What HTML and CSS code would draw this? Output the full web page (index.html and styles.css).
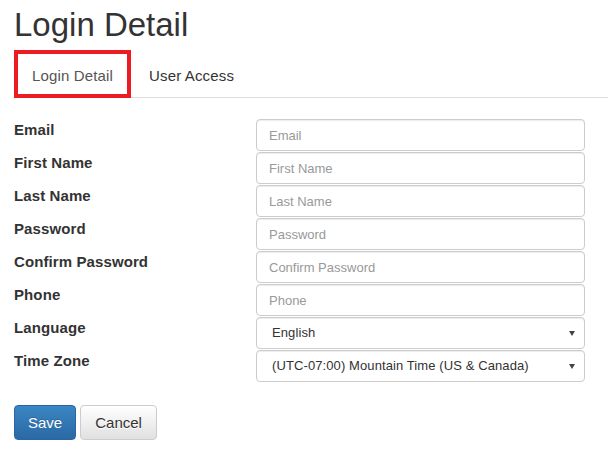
FILE: index.html
```html
<!DOCTYPE html>
<html>
<head>
<meta charset="utf-8">
<link rel="stylesheet" href="styles.css">
</head>
<body>
<div class="page">
  <h1 class="title">Login Detail</h1>
  <ul class="tabs">
    <li class="tab active">Login Detail</li>
    <li class="tab">User Access</li>
  </ul>
  <form class="form">
    <div class="row"><label class="lbl">Email</label><input class="ctl" placeholder="Email"></div>
    <div class="row"><label class="lbl">First Name</label><input class="ctl" placeholder="First Name"></div>
    <div class="row"><label class="lbl">Last Name</label><input class="ctl" placeholder="Last Name"></div>
    <div class="row"><label class="lbl">Password</label><input class="ctl" type="password" placeholder="Password"></div>
    <div class="row"><label class="lbl">Confirm Password</label><input class="ctl" type="password" placeholder="Confirm Password"></div>
    <div class="row"><label class="lbl">Phone</label><input class="ctl" placeholder="Phone"></div>
    <div class="row"><label class="lbl">Language</label><div class="sel"><span>English</span></div></div>
    <div class="row"><label class="lbl">Time Zone</label><div class="sel"><span>(UTC-07:00) Mountain Time (US &amp; Canada)</span></div></div>
    <div class="actions">
      <button type="button" class="btn primary">Save</button>
      <button type="button" class="btn default">Cancel</button>
    </div>
  </form>
</div>
</body>
</html>
```
FILE: styles.css
```css
* { box-sizing: border-box; }
html, body { margin: 0; padding: 0; background: #fff; }
body {
  font-family: "Liberation Sans", Arial, sans-serif;
  color: #333;
  font-size: 14px;
  line-height: 20px;
}
.page { padding-left: 14px; }
.title {
  margin: 7px 0 8px 0;
  font-size: 33px;
  line-height: 35px;
  font-weight: normal;
  color: #333;
}
.tabs {
  list-style: none;
  margin: 0;
  padding: 0;
  display: flex;
  border-bottom: 1px solid #ddd;
}
.tab {
  font-size: 15px;
  line-height: 20px;
  letter-spacing: 0.15px;
  padding: 12px 14px 8px 14px;
  border: 4px solid transparent;
  margin-bottom: -1px;
  color: #333;
}
.tab.active {
  border-color: #ed1c24;
  color: #555;
}
.form { padding-top: 21px; }
.row {
  display: flex;
  align-items: flex-start;
  margin-bottom: 1px;
}
.lbl {
  width: 242px;
  flex: none;
  font-weight: bold;
  font-size: 15px;
  line-height: 20px;
  padding-top: 1px;
  letter-spacing: 0.1px;
  color: #333;
}
.ctl, .sel {
  width: 329px;
  height: 32px;
  border: 1px solid #ccc;
  border-radius: 4px;
  box-shadow: inset 0 1px 1px rgba(0,0,0,.075);
  font-family: "Liberation Sans", Arial, sans-serif;
  font-size: 13px;
  color: #555;
  background: #fff;
}
.ctl {
  padding: 0 12px;
  outline: none;
}
.ctl::placeholder { color: #999; }
.sel {
  position: relative;
  display: flex;
  align-items: center;
  padding-left: 15px;
  color: #333;
}
.sel span { letter-spacing: 0.1px; }
.sel::after {
  content: "";
  position: absolute;
  right: 9px;
  top: 13px;
  border-left: 3.5px solid transparent;
  border-right: 3.5px solid transparent;
  border-top: 5px solid #444;
}
.actions {
  display: flex;
  gap: 4px;
  padding-top: 22px;
}
.btn {
  font-family: "Liberation Sans", Arial, sans-serif;
  font-size: 15px;
  line-height: 21px;
  padding: 6px 13px;
  border-radius: 4px;
  border: 1px solid;
  cursor: pointer;
}
.btn.default { padding: 6px 14px; }
.btn.primary {
  color: #fff;
  background: linear-gradient(to bottom, #3a86c4 0%, #2a69a4 100%);
  border-color: #2a67a0;
  text-shadow: 0 -1px 0 rgba(0,0,0,.2);
}
.btn.default {
  color: #333;
  background: linear-gradient(to bottom, #fff 0%, #e0e0e0 100%);
  border-color: #ccc;
  text-shadow: 0 1px 0 #fff;
}
```
